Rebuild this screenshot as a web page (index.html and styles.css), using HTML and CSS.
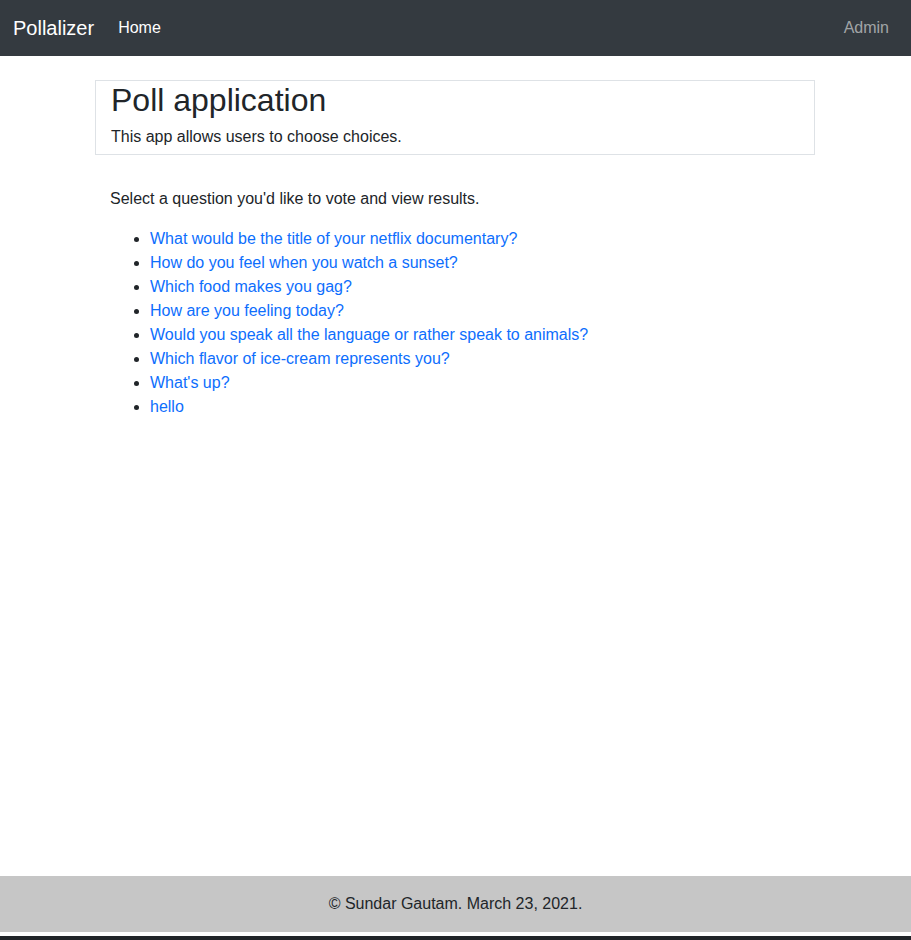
FILE: index.html
```html
<!DOCTYPE html>
<html lang="en">
<head>
<meta charset="utf-8">
<title>Pollalizer</title>
<link rel="stylesheet" href="styles.css">
</head>
<body>
<nav class="navbar">
  <a class="brand" href="#">Pollalizer</a>
  <a class="nav-link active" href="#">Home</a>
  <a class="nav-link admin" href="#">Admin</a>
</nav>
<main class="main">
  <div class="container">
    <div class="jumbo">
      <h1 class="title">Poll application</h1>
      <p class="lead">This app allows users to choose choices.</p>
    </div>
    <div class="content">
      <p class="intro">Select a question you'd like to vote and view results.</p>
      <ul class="questions">
        <li><a href="#">What would be the title of your netflix documentary?</a></li>
        <li><a href="#">How do you feel when you watch a sunset?</a></li>
        <li><a href="#">Which food makes you gag?</a></li>
        <li><a href="#">How are you feeling today?</a></li>
        <li><a href="#">Would you speak all the language or rather speak to animals?</a></li>
        <li><a href="#">Which flavor of ice-cream represents you?</a></li>
        <li><a href="#">What's up?</a></li>
        <li><a href="#">hello</a></li>
      </ul>
    </div>
  </div>
</main>
<footer class="footer">© Sundar Gautam. March 23, 2021.</footer>
<div class="bottom-bar"></div>
</body>
</html>
```
FILE: styles.css
```css
* { box-sizing: border-box; }
body {
  margin: 0;
  font-family: "Liberation Sans", Arial, sans-serif;
  font-size: 16px;
  line-height: 1.5;
  color: #212529;
  background: #fff;
}
a { text-decoration: none; }
.navbar {
  height: 56px;
  background: #343a40;
  display: flex;
  align-items: center;
  padding: 0 13px;
}
.brand {
  color: #fff;
  font-size: 20px;
  margin-right: 24px;
}
.nav-link {
  color: #fff;
  font-size: 16px;
}
.nav-link.admin {
  margin-left: auto;
  margin-right: 9px;
  color: rgba(255,255,255,0.55);
}
.main {
  height: 820px;
  padding-top: 24px;
}
.container {
  width: 720px;
  margin-left: 95px;
}
.jumbo {
  border: 1px solid #dee2e6;
  padding: 0 15px 5px;
}
.title {
  margin: 0;
  font-size: 32px;
  font-weight: 400;
  line-height: 1.2;
}
.lead {
  margin: 6px 0 0;
}
.content {
  padding: 32px 15px 0;
}
.intro { margin: 0 0 16px; }
.questions {
  margin: 0;
  padding-left: 40px;
  line-height: 24px;
}
.questions a { color: #0d6efd; }
.footer {
  background: #c6c6c6;
  height: 56px;
  display: flex;
  align-items: center;
  justify-content: center;
}
.bottom-bar {
  margin-top: 4px;
  height: 20px;
  background: #212529;
}
```
